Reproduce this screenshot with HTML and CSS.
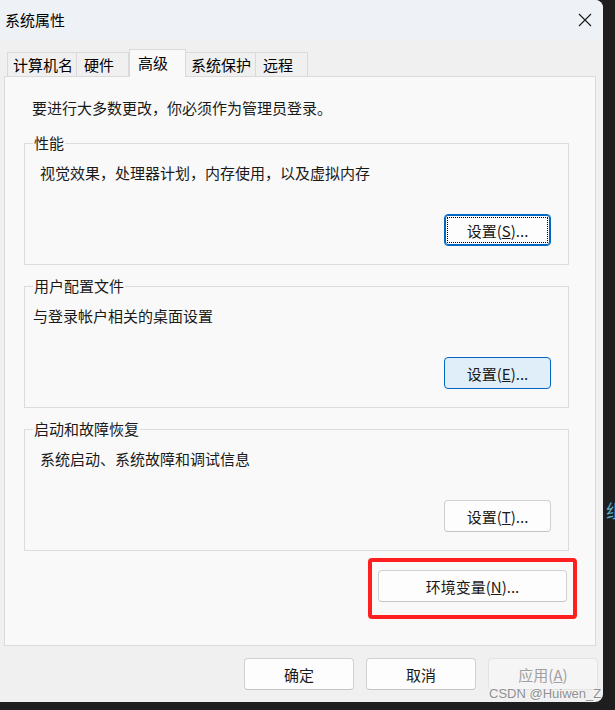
FILE: index.html
```html
<!DOCTYPE html>
<html lang="zh-CN">
<head>
    <meta charset="UTF-8">
    <meta name="viewport" content="width=device-width, initial-scale=1.0">
    <title>系统属性</title>
    <link rel="stylesheet" href="styles.css">
</head>
<body>
    <div class="window">
        <div class="titlebar">
            <span class="title">系统属性</span>
            <svg class="close" width="14" height="14" viewBox="0 0 14 14">
                <path d="M1 1 L13 13 M13 1 L1 13" stroke="#1a1a1a" stroke-width="1.1" fill="none"/>
            </svg>
        </div>

        <div class="tabs">
            <div class="tab tab-wide">计算机名</div>
            <div class="tab tab-short">硬件</div>
            <div class="tab tab-active">高级</div>
            <div class="tab tab-wide">系统保护</div>
            <div class="tab tab-short">远程</div>
        </div>

        <div class="panel">
            <p class="note">要进行大多数更改，你必须作为管理员登录。</p>

            <fieldset class="group">
                <legend>性能</legend>
                <p class="desc indent">视觉效果，处理器计划，内存使用，以及虚拟内存</p>
                <div class="actions">
                    <button class="btn btn-focus">设置(<u>S</u>)...</button>
                </div>
            </fieldset>

            <fieldset class="group">
                <legend>用户配置文件</legend>
                <p class="desc">与登录帐户相关的桌面设置</p>
                <div class="actions">
                    <button class="btn btn-hover">设置(<u>E</u>)...</button>
                </div>
            </fieldset>

            <fieldset class="group">
                <legend>启动和故障恢复</legend>
                <p class="desc indent">系统启动、系统故障和调试信息</p>
                <div class="actions">
                    <button class="btn">设置(<u>T</u>)...</button>
                </div>
            </fieldset>

            <div class="env-row">
                <div class="env-wrap">
                    <button class="btn btn-env">环境变量(<u>N</u>)...</button>
                    <span class="highlight"></span>
                </div>
            </div>
        </div>

        <div class="footer">
            <button class="btn btn-dialog">确定</button>
            <button class="btn btn-dialog">取消</button>
            <button class="btn btn-dialog btn-disabled">应用(<u>A</u>)</button>
        </div>
    </div>

    <div class="bg-glyph">组</div>
    <div class="watermark">CSDN @Huiwen_Z</div>
</body>
</html>
```

FILE: styles.css
```css
body {
    margin: 0;
    height: 710px;
    background-color: #1e1e1e;
    font-family: "Noto Sans CJK SC", "Noto Sans", sans-serif;
    font-size: 15px;
    color: #1a1a1a;
    overflow: hidden;
    position: relative;
}
.window {
    width: 603px;
    height: 702px;
    background-color: #f0f0f0;
    border-radius: 0 8px 8px 0;
    overflow: hidden;
}
.titlebar {
    height: 40px;
    background-color: #eef2f7;
    display: flex;
    align-items: center;
    justify-content: space-between;
    padding: 0 11px 0 5px;
}
.title {
    line-height: 20px;
    color: #000;
}
.close {
    display: block;
}

/* tab strip */
.tabs {
    display: flex;
    align-items: flex-end;
    height: 28px;
    margin-top: 9px;
    padding-left: 7px;
    margin-bottom: -1px;
    position: relative;
    z-index: 1;
}
.tab {
    box-sizing: border-box;
    height: 24px;
    margin-bottom: 1px;
    padding-left: 5px;
    line-height: 23px;
    background-color: #f0f0f0;
    border: 1px solid #dadada;
    border-bottom: none;
    border-left: none;
    color: #000;
}
.tab:first-child {
    border-left: 1px solid #dadada;
}
.tab-wide {
    width: 70px;
}
.tab-short {
    width: 52px;
    padding-left: 7px;
}
.tab-active {
    width: 57px;
    height: 28px;
    margin-bottom: 0;
    padding-left: 8px;
    line-height: 26px;
    background-color: #f9f9f9;
    border-left: 1px solid #dadada;
}
.tab-active + .tab {
    border-left: none;
}

/* main panel */
.panel {
    box-sizing: border-box;
    height: 570px;
    margin: 0 7px 0 4px;
    padding-top: 21px;
    background-color: #f9f9f9;
    border: 1px solid #dadada;
}
.note {
    margin: 0 0 0 27px;
    line-height: 20px;
}
.group {
    margin: 15px 26px 0 19px;
    padding: 0 17px 18px 8px;
    border: 1px solid #dcdcdc;
}
.group + .group {
    margin-top: 11px;
}
.group legend {
    padding: 0 1px;
    line-height: 20px;
}
.desc {
    margin: 10px 0 0 0;
    line-height: 20px;
}
.indent {
    padding-left: 7px;
}
.actions {
    display: flex;
    justify-content: flex-end;
    margin-top: 31px;
}

/* buttons */
.btn {
    box-sizing: border-box;
    width: 107px;
    height: 32px;
    padding: 0;
    font-family: inherit;
    font-size: 15px;
    color: #1a1a1a;
    background-color: #fdfdfd;
    border: 1px solid #d0d0d0;
    border-bottom-color: #c4c4c4;
    border-radius: 4px;
}
.btn-focus {
    border: 1px solid #0067c0;
    box-shadow: inset 0 0 0 1px #0067c0;
    outline: 1px dotted #000;
    outline-offset: -4px;
}
.btn-hover {
    background-color: #e0eef9;
    border: 1px solid #0067c0;
}
.env-row {
    display: flex;
    justify-content: flex-end;
    margin-top: 19px;
    padding-right: 28px;
}
.env-wrap {
    position: relative;
}
.btn-env {
    width: 189px;
    display: block;
}
.highlight {
    position: absolute;
    left: -10px;
    right: -10px;
    top: -12px;
    bottom: -17px;
    border: 4px solid #ff1f1f;
    border-radius: 4px;
    box-sizing: border-box;
}
.footer {
    display: flex;
    justify-content: flex-end;
    gap: 12px;
    margin-top: 12px;
    padding-right: 5px;
}
.btn-dialog {
    width: 110px;
}
.btn-disabled {
    color: #a0a0a0;
    background-color: #f5f5f5;
    border-color: #e3e3e3;
}

/* overlays from the screenshot */
.watermark {
    position: absolute;
    left: 489px;
    top: 684px;
    font-family: "Liberation Sans", Arial, sans-serif;
    font-size: 13px;
    line-height: 20px;
    color: #8f8f8f;
    text-shadow: 0 0 2px #fff;
}
.bg-glyph {
    position: absolute;
    left: 606px;
    top: 498px;
    font-size: 18px;
    line-height: 24px;
    color: #5fb0c4;
}
```
